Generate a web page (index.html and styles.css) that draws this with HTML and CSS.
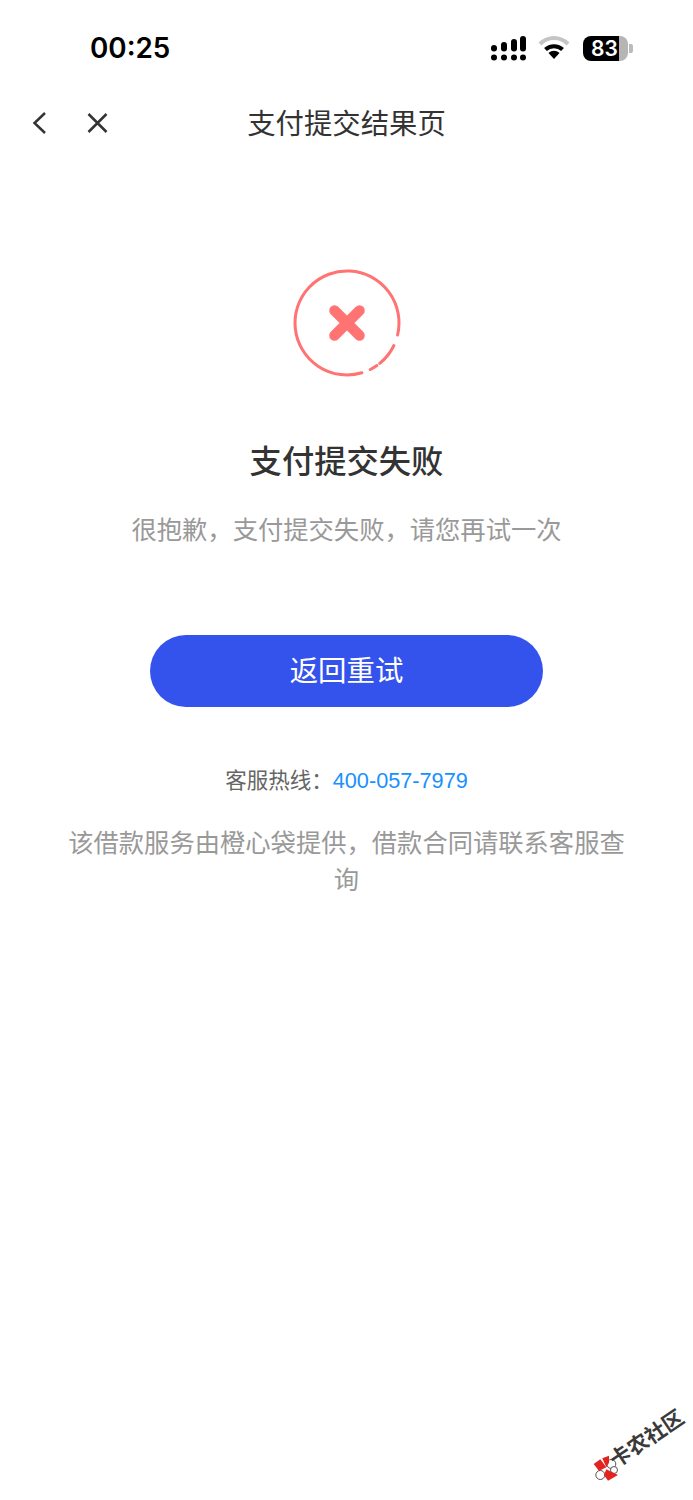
FILE: index.html
```html
<!DOCTYPE html>
<html lang="zh-CN">
<head>
    <meta charset="UTF-8">
    <meta name="viewport" content="width=device-width, initial-scale=1.0">
    <title>支付提交结果页</title>
    <link rel="stylesheet" href="styles.css">
</head>
<body>
<div class="page">
    <div class="status-bar">
        <span class="time">00:25</span>
        <div class="status-icons">
            <svg class="signal" width="35" height="25" viewBox="0 0 35 25">
                <g fill="#000">
                    <rect x="0" y="9" width="6" height="6.500" rx="3"/>
                    <rect x="10" y="6" width="6" height="9.500" rx="3"/>
                    <rect x="20" y="3" width="6" height="12.500" rx="3"/>
                    <rect x="29" y="0" width="6" height="15.500" rx="3"/>
                    <circle cx="3" cy="21.500" r="3"/>
                    <circle cx="13" cy="21.500" r="3"/>
                    <circle cx="23" cy="21.500" r="3"/>
                    <circle cx="32" cy="21.500" r="3"/>
                </g>
            </svg>
            <svg class="wifi" width="32" height="24" viewBox="0 0 32 24">
                <path d="M2 8 C10 0 22 0 30 8" fill="none" stroke="#c4c4c4" stroke-width="4"/>
                <path d="M7.500 13.500 C12 9 20 9 24.500 13.500" fill="none" stroke="#000" stroke-width="4"/>
                <path d="M10.500 17 C14 14 18 14 21.500 17 L16 23 Z" fill="#000"/>
            </svg>
            <div class="battery">
                <div class="battery-body">
                    <span class="battery-level">83</span>
                </div>
                <div class="battery-cap"></div>
            </div>
        </div>
    </div>

    <div class="nav-bar">
        <div class="nav-icons">
            <svg width="16" height="24" viewBox="0 0 16 24">
                <path d="M13 2 L2.500 12 L13 22" fill="none" stroke="#333" stroke-width="2.500"/>
            </svg>
            <svg width="24" height="24" viewBox="0 0 24 24">
                <path d="M3.500 3 L21.500 21 M21.500 3 L3.500 21" fill="none" stroke="#333" stroke-width="2.500"/>
            </svg>
        </div>
        <h1 class="nav-title">支付提交结果页</h1>
    </div>

    <div class="result">
        <svg class="result-icon" width="110" height="110" viewBox="0 0 110 110">
            <g fill="none" stroke="#ff7373" stroke-width="3" stroke-linecap="round">
                <path d="M105.600 67 A52 52 0 1 0 69.900 104.800"/>
                <path d="M101.900 77.500 A52 52 0 0 1 87.700 95.400"/>
                <path d="M84.900 97.500 A52 52 0 0 1 78.300 101.500"/>
            </g>
            <path d="M42.500 42.500 L67.500 67.500 M67.500 42.500 L42.500 67.500" fill="none" stroke="#ff7373" stroke-width="10.500" stroke-linecap="round"/>
        </svg>
        <h2 class="result-title">支付提交失败</h2>
        <p class="result-desc">很抱歉，支付提交失败，请您再试一次</p>
        <button class="retry-btn">返回重试</button>
        <p class="hotline">客服热线：<span class="hotline-num">400-057-7979</span></p>
        <p class="notice">该借款服务由橙心袋提供，借款合同请联系客服查询</p>
    </div>

    <svg class="watermark-logo" width="30" height="30" viewBox="0 0 30 30">
        <circle cx="19.300" cy="12" r="4.500" fill="#fff" stroke="#555" stroke-width="1"/>
        <circle cx="8.300" cy="23" r="4.500" fill="#fff" stroke="#555" stroke-width="1"/>
        <circle cx="22" cy="18" r="3.500" fill="#fff" stroke="#555" stroke-width="1"/>
        <g fill="#e2231f">
            <path d="M1.700 12 L8.300 7.300 L14.300 15.300 L7 19 Z"/>
            <path d="M10.300 6.300 L17 3.700 L17 10.700 L14.300 15.300 Z"/>
            <path d="M14.300 17.300 L26 23 L16 28.700 L12 23 Z"/>
        </g>
    </svg>
    <span class="watermark-text">卡农社区</span>
</div>
</body>
</html>
```

FILE: styles.css
```css
* {
    box-sizing: border-box;
}
body {
    margin: 0;
    background-color: #fff;
    font-family: "Liberation Sans", "Noto Sans CJK SC", sans-serif;
}
.page {
    position: relative;
    width: 693px;
    height: 1500px;
    overflow: hidden;
}
.status-bar {
    display: flex;
    justify-content: space-between;
    align-items: center;
    height: 96px;
    padding: 0 60px 0 90px;
}
.time {
    font-family: Inter, "Liberation Sans", sans-serif;
    font-size: 27.800px;
    font-weight: 600;
    color: #000;
}
.status-icons {
    display: flex;
    align-items: center;
    gap: 12px;
}
.battery {
    display: flex;
    align-items: center;
    margin-left: 1px;
}
.battery-body {
    width: 45px;
    height: 25px;
    border-radius: 8px;
    background: linear-gradient(to right, #000 80%, #b5b5b5 80%);
    padding-left: 8px;
}
.battery-level {
    display: block;
    font-family: Inter, "Liberation Sans", sans-serif;
    font-size: 21px;
    font-weight: 600;
    line-height: 25px;
    color: #fff;
}
.battery-cap {
    width: 4px;
    height: 9px;
    margin-left: 1px;
    border-radius: 0 2px 2px 0;
    background-color: #bbb;
}
.nav-bar {
    position: relative;
    height: 54px;
    padding-bottom: 3px;
    display: flex;
    align-items: center;
    justify-content: center;
}
.nav-icons {
    position: absolute;
    left: 32px;
    top: 15px;
    display: flex;
    align-items: center;
    gap: 37px;
}
.nav-title {
    margin: 0;
    font-size: 28.400px;
    font-weight: 400;
    color: #333;
}
.result {
    display: flex;
    flex-direction: column;
    align-items: center;
    padding: 0 60px;
}
.result-icon {
    margin-top: 118px;
}
.result-title {
    margin: 62px 0 0;
    font-size: 32.300px;
    line-height: 44px;
    font-weight: 500;
    color: #333;
}
.result-desc {
    margin: 28px 0 0;
    font-size: 25.300px;
    line-height: 36px;
    color: #999;
}
.retry-btn {
    width: 393px;
    height: 72px;
    margin-top: 87px;
    padding: 0 0 6px;
    border: 0;
    border-radius: 36px;
    background-color: #3353ec;
    color: #fff;
    font-family: inherit;
    font-size: 28.400px;
}
.hotline {
    margin: 57px 0 0;
    font-size: 21.500px;
    line-height: 34px;
    color: #666;
}
.hotline-num {
    color: #1890ff;
    font-size: 21.700px;
}
.notice {
    margin: 27px 0 0;
    width: 565px;
    font-size: 25.300px;
    line-height: 37px;
    color: #999;
    text-align: center;
}
.watermark-logo {
    position: absolute;
    left: 592px;
    top: 1452px;
}
.watermark-text {
    position: absolute;
    left: 605px;
    top: 1427px;
    width: 84px;
    font-size: 21px;
    line-height: 24px;
    font-weight: 700;
    color: #3a3a3a;
    white-space: nowrap;
    transform: rotate(-34deg);
}
```
